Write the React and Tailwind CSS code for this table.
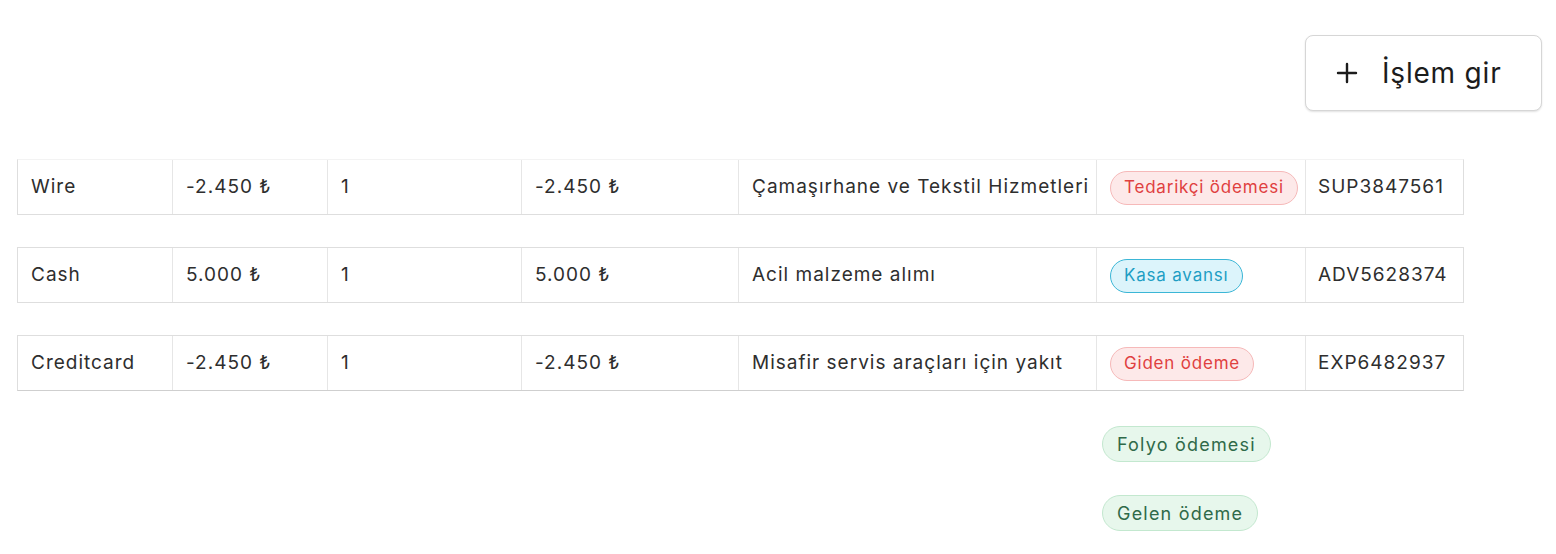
import React from "react";

const rows = [
  {
    method: "Wire",
    amount: "-2.450 ₺",
    qty: "1",
    total: "-2.450 ₺",
    desc: "Çamaşırhane ve Tekstil Hizmetleri",
    tag: "Tedarikçi ödemesi",
    tone: "red",
    ref: "SUP3847561",
    top: "border-t-[#f3f3f3]",
  },
  {
    method: "Cash",
    amount: "5.000 ₺",
    qty: "1",
    total: "5.000 ₺",
    desc: "Acil malzeme alımı",
    tag: "Kasa avansı",
    tone: "blue",
    ref: "ADV5628374",
    top: "border-t-[#dedede]",
  },
  {
    method: "Creditcard",
    amount: "-2.450 ₺",
    qty: "1",
    total: "-2.450 ₺",
    desc: "Misafir servis araçları için yakıt",
    tag: "Giden ödeme",
    tone: "red",
    ref: "EXP6482937",
    top: "border-t-[#dedede]",
  },
];

const toneClass = {
  red: "bg-[#fde9e9] border-[#f6b9b9] text-[#e0403f]",
  blue: "bg-[#dcf4fb] border-[#3bb6d6] text-[#1e9ec4]",
  green: "bg-[#e7f7ec] border-[#c3e8cf] text-[#2f6a49]",
};

const Badge = ({ tone, children, big }) => (
  <span
    className={`inline-flex items-center rounded-full border whitespace-nowrap ${
      big ? "h-[36px] px-[14px] text-[18px] tracking-[1.2px]" : "h-[34px] px-[13px] text-[17px] tracking-[0.8px]"
    } ${toneClass[tone]}`}
  >
    {children}
  </span>
);

const cell = "flex items-center px-[13px] border-r border-[#e6e6e6] h-full";

const App = () => {
  return (
    <div
      className="w-[1556px] h-[554px] bg-white text-[#2e2e2e] overflow-hidden"
      style={{ fontFamily: "Inter, 'Noto Sans', sans-serif" }}
    >
      <div className="flex justify-end pt-[35px] pr-[14px]">
        <button className="flex items-center h-[76px] w-[237px] pl-[30px] rounded-[8px] border border-[#d6d6d6] bg-white shadow-[0_1px_2px_rgba(0,0,0,0.12)] text-[28px] tracking-[0.8px] text-[#1c1c1c]">
          <svg width="22" height="22" viewBox="0 0 22 22">
            <path d="M11 2v18M2 11h18" stroke="#1c1c1c" strokeWidth="2.4" strokeLinecap="round" />
          </svg>
          <span className="ml-[24px]">İşlem gir</span>
        </button>
      </div>

      <div className="flex flex-col gap-[32px] pl-[17px] mt-[48px]">
        {rows.map((r, i) => (
          <div
            key={i}
            className={`flex w-[1447px] h-[56px] border border-[#dedede] ${r.top} ${
              i === 2 ? "border-b-[#cfcfcf]" : ""
            } text-[19px] tracking-[1px]`}
          >
            <div className={`${cell} w-[155px]`}>{r.method}</div>
            <div className={`${cell} w-[155px]`}>{r.amount}</div>
            <div className={`${cell} w-[194px]`}>{r.qty}</div>
            <div className={`${cell} w-[217px]`}>{r.total}</div>
            <div className={`${cell} w-[358px] whitespace-nowrap`}>{r.desc}</div>
            <div className={`${cell} w-[209px] px-[8px] pt-[2px]`}>
              <Badge tone={r.tone}>{r.tag}</Badge>
            </div>
            <div className="flex items-center px-[12px] flex-1">{r.ref}</div>
          </div>
        ))}
      </div>

      <div className="flex flex-col items-start gap-[33px] pl-[1102px] mt-[35px]">
        <Badge tone="green" big>
          Folyo ödemesi
        </Badge>
        <Badge tone="green" big>
          Gelen ödeme
        </Badge>
      </div>
    </div>
  );
};

export default App;
